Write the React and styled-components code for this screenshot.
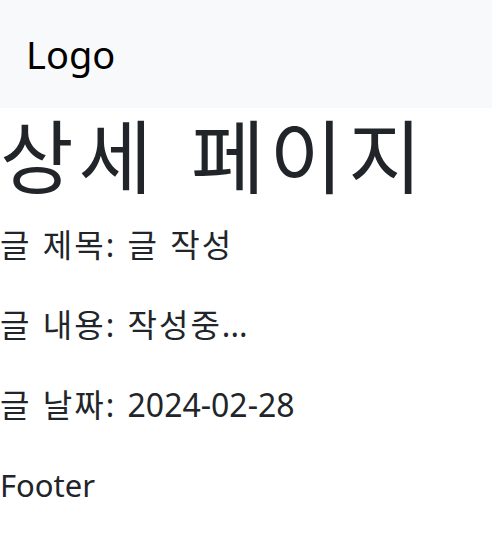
import styled, { createGlobalStyle } from "styled-components";

const GlobalStyle = createGlobalStyle`
  body {
    margin: 0;
    font-family: "Noto Sans", "Noto Sans CJK KR", sans-serif;
    color: #212529;
    background: #ffffff;
  }
`;

const Navbar = styled.nav`
  height: 108px;
  background-color: #f8f9fa;
  display: flex;
  align-items: center;
  padding: 0 26px;
`;

const Brand = styled.span`
  font-size: 38px;
  color: #000000;
`;

const Title = styled.h1`
  margin: 0 0 17px;
  font-size: 80px;
  font-weight: 400;
  line-height: 1.2;
  letter-spacing: 5px;
  word-spacing: 8px;
`;

const Line = styled.p`
  margin: 0 0 32px;
  font-size: 32px;
  line-height: 48px;
  letter-spacing: 2px;
  word-spacing: 1px;
`;

const Plain = styled.span`
  letter-spacing: 0;
`;

const Footer = styled.footer`
  font-size: 31px;
  line-height: 48px;
`;

const App = () => {
  return (
    <>
      <GlobalStyle />
      <Navbar>
        <Brand>Logo</Brand>
      </Navbar>
      <Title>상세 페이지</Title>
      <Line>글 제목: 글 작성</Line>
      <Line>
        글 내용: 작성중<Plain>...</Plain>
      </Line>
      <Line>
        글 날짜: <Plain>2024-02-28</Plain>
      </Line>
      <Footer>Footer</Footer>
    </>
  );
};

export default App;
